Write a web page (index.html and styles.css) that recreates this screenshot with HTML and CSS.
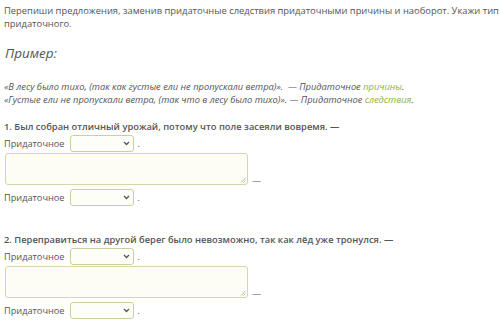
FILE: index.html
```html
<!DOCTYPE html>
<html lang="ru">
<head>
<meta charset="utf-8">
<link rel="stylesheet" href="styles.css">
</head>
<body>
<div class="page">
  <p class="intro">Перепиши предложения, заменив придаточные следствия придаточными причины и наоборот. Укажи тип придаточного.</p>
  <h2 class="ex-title">Пример:</h2>
  <div class="examples">
    <p>«В лесу было тихо, (так как густые ели не пропускали ветра)». &nbsp;— Придаточное <span class="green">причины</span>.</p>
    <p>«Густые ели не пропускали ветра, (так что в лесу было тихо)». — Придаточное <span class="green">следствия</span>.</p>
  </div>

  <div class="task">
    <p class="question">1. Был собран отличный урожай, потому что поле засеяли вовремя. —</p>
    <div class="row"><span>Придаточное</span><span class="select"><svg width="7" height="5" viewBox="0 0 7 5"><path d="M1 1l2.5 2.5L6 1" fill="none" stroke="#555" stroke-width="1.3"/></svg></span><span class="dot">.</span></div>
    <div class="row tarow"><span class="textarea"><svg class="grip" width="6" height="6" viewBox="0 0 6 6"><path d="M5.5 1L1 5.5M5.5 3.5L3.5 5.5" stroke="#aaa" stroke-width="0.8"/></svg></span><span class="dash">—</span></div>
    <div class="row row-after"><span>Придаточное</span><span class="select"><svg width="7" height="5" viewBox="0 0 7 5"><path d="M1 1l2.5 2.5L6 1" fill="none" stroke="#555" stroke-width="1.3"/></svg></span><span class="dot">.</span></div>
  </div>

  <div class="task task2">
    <p class="question">2. Переправиться на другой берег было невозможно, так как лёд уже тронулся. —</p>
    <div class="row"><span>Придаточное</span><span class="select"><svg width="7" height="5" viewBox="0 0 7 5"><path d="M1 1l2.5 2.5L6 1" fill="none" stroke="#555" stroke-width="1.3"/></svg></span><span class="dot">.</span></div>
    <div class="row tarow"><span class="textarea"><svg class="grip" width="6" height="6" viewBox="0 0 6 6"><path d="M5.5 1L1 5.5M5.5 3.5L3.5 5.5" stroke="#aaa" stroke-width="0.8"/></svg></span><span class="dash">—</span></div>
    <div class="row row-after"><span>Придаточное</span><span class="select"><svg width="7" height="5" viewBox="0 0 7 5"><path d="M1 1l2.5 2.5L6 1" fill="none" stroke="#555" stroke-width="1.3"/></svg></span><span class="dot">.</span></div>
  </div>
</div>
</body>
</html>
```
FILE: styles.css
```css
html, body {
  margin: 0;
  padding: 0;
  background: #fff;
}
.page {
  font-family: "Open Sans", "DejaVu Sans", sans-serif;
  color: #555;
  font-size: 9.2px;
  padding: 5px 0 0 4px;
}
p { margin: 0; }
.intro {
  font-size: 9.4px;
  line-height: 12.5px;
}
.ex-title {
  font-style: italic;
  font-weight: normal;
  font-size: 13.5px;
  line-height: 20px;
  margin: 13px 0 0 1px;
  color: #555;
}
.examples {
  font-style: italic;
  font-size: 9.3px;
  line-height: 12.5px;
  margin-top: 18px;
}
.green { color: #93ad4a; }
.task { margin-top: 14px; }
.task2 { margin-top: 27px; }
.question {
  font-weight: 600;
  font-size: 9.35px;
  line-height: 14px;
}
.row {
  display: flex;
  align-items: center;
  gap: 3px;
  height: 18px;
}
.row > span:first-child { margin-right: 3px; }
.row-after { margin-top: 3px; }
.select {
  display: inline-flex;
  justify-content: flex-end;
  align-items: center;
  width: 64px;
  height: 17px;
  border: 1px solid #cbcf9f;
  border-radius: 3px;
  background: #fefef8;
  padding-right: 3px;
  box-sizing: border-box;
  margin-top: 1px;
}
.tarow {
  align-items: flex-end;
  gap: 4px;
  height: 32px;
  margin: 1px 0 0 1px;
}
.tarow > span:first-child { margin-right: 0; }
.textarea {
  position: relative;
  width: 243px;
  height: 32px;
  box-sizing: border-box;
  border: 1px solid #d3d8a8;
  border-radius: 3px;
  background: #fdfdf6;
}
.grip {
  position: absolute;
  right: 1px;
  bottom: 1px;
}
.dash { line-height: 10px; margin-bottom: -1px; }
```
